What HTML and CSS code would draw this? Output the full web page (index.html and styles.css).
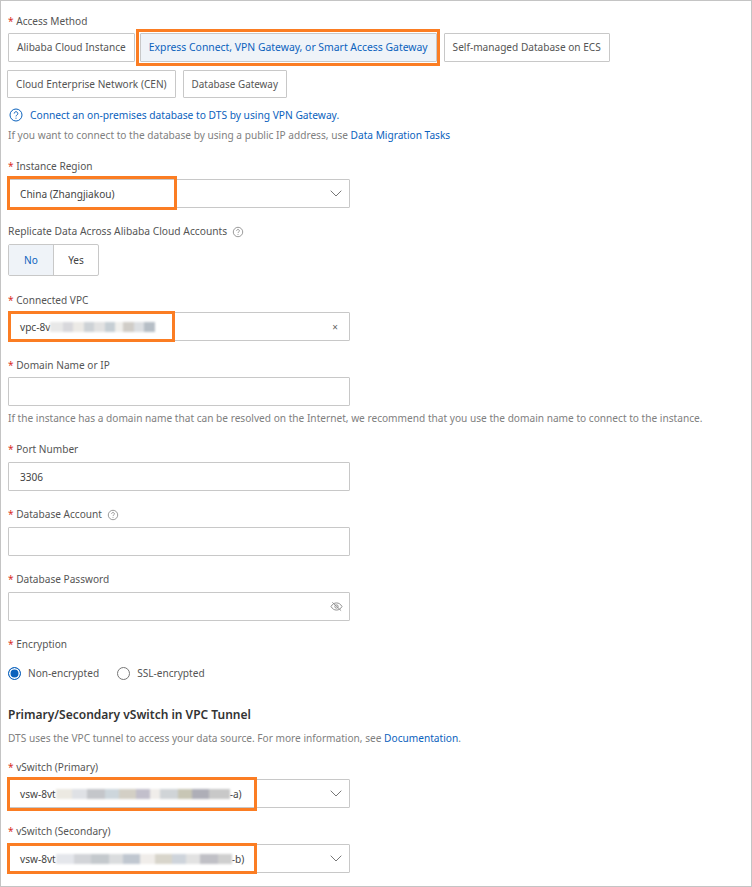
FILE: index.html
```html
<!DOCTYPE html>
<html lang="en">
<head>
<meta charset="utf-8">
<title>Access Method</title>
<link rel="stylesheet" href="styles.css">
</head>
<body>
<form class="panel">
  <div class="field">
    <div class="label label-tight"><span class="req">*</span> Access Method</div>
    <div class="choices">
      <span class="choice choice-first">Alibaba Cloud Instance</span>
      <span class="choice choice-on">Express Connect, VPN Gateway, or Smart Access Gateway<i class="mark mark-choice"></i></span>
      <span class="choice choice-third">Self-managed Database on ECS</span>
    </div>
    <div class="choices choices-second">
      <span class="choice">Cloud Enterprise Network (CEN)</span>
      <span class="choice choice-gateway">Database Gateway</span>
    </div>
    <div class="help-line">
      <svg class="qicon qicon-blue" viewBox="0 0 14 14"><circle cx="7" cy="7" r="6"/><path d="M5.2 5.500a1.800 1.800 0 1 1 2.700 1.600c-.6.3-.9.7-.9 1.300"/><path d="M7 9.700v1"/></svg>
      <a class="link link-help">Connect an on-premises database to DTS by using VPN Gateway.</a>
    </div>
    <div class="note note-tight">If you want to connect to the database by using a public IP address, use <a class="link">Data Migration Tasks</a></div>
  </div>

  <div class="field">
    <div class="label"><span class="req">*</span> Instance Region</div>
    <div class="control">China (Zhangjiakou)
      <svg class="chev" viewBox="0 0 12 7"><path d="M.7.7 6 6l5.300-5.300"/></svg>
      <i class="mark mark-region"></i>
    </div>
  </div>

  <div class="field field-toggle">
    <div class="label label-replicate">Replicate Data Across Alibaba Cloud Accounts
      <svg class="qicon" viewBox="0 0 14 14"><circle cx="7" cy="7" r="5.500"/><path d="M5.400 5.600a1.600 1.600 0 1 1 2.400 1.400c-.5.3-.8.6-.8 1.200"/><path d="M7 9.300v1"/></svg>
    </div>
    <div class="toggle"><span class="tog tog-on">No</span><span class="tog">Yes</span></div>
  </div>

  <div class="field field-vpc">
    <div class="label label-tight"><span class="req">*</span> Connected VPC</div>
    <div class="control"><span>vpc-8v</span><span class="blur blur-vpc"></span>
      <span class="clear">×</span>
      <i class="mark mark-vpc"></i>
    </div>
  </div>

  <div class="field">
    <div class="label label-tight"><span class="req">*</span> Domain Name or IP</div>
    <div class="control"></div>
    <div class="note note-hint">If the instance has a domain name that can be resolved on the Internet, we recommend that you use the domain name to connect to the instance.</div>
  </div>

  <div class="field">
    <div class="label"><span class="req">*</span> Port Number</div>
    <div class="control">3306</div>
  </div>

  <div class="field">
    <div class="label"><span class="req">*</span> Database Account
      <svg class="qicon" viewBox="0 0 14 14"><circle cx="7" cy="7" r="5.500"/><path d="M5.400 5.600a1.600 1.600 0 1 1 2.400 1.400c-.5.3-.8.6-.8 1.200"/><path d="M7 9.300v1"/></svg>
    </div>
    <div class="control"></div>
  </div>

  <div class="field">
    <div class="label"><span class="req">*</span> Database Password</div>
    <div class="control">
      <svg class="eye" viewBox="0 0 14 12"><path d="M1 6c1.500-2.600 3.500-3.900 6-3.900s4.500 1.300 6 3.900c-1.500 2.600-3.500 3.900-6 3.900S2.500 8.600 1 6z"/><circle cx="7" cy="6" r="1.800"/><path d="M2.500 1.500l9.500 9"/></svg>
    </div>
  </div>

  <div class="field field-radio">
    <div class="label"><span class="req">*</span> Encryption</div>
    <div class="radios">
      <span class="radio"><i class="dot dot-on"></i>Non-encrypted</span>
      <span class="radio"><i class="dot"></i>SSL-encrypted</span>
    </div>
  </div>

  <h3 class="heading">Primary/Secondary vSwitch in VPC Tunnel</h3>
  <div class="note note-desc">DTS uses the VPC tunnel to access your data source. For more information, see <a class="link">Documentation</a>.</div>

  <div class="field">
    <div class="label label-tight"><span class="req">*</span> vSwitch (Primary)</div>
    <div class="control"><span>vsw-8vt</span><span class="blur blur-a"></span><span>-a)</span>
      <svg class="chev" viewBox="0 0 12 7"><path d="M.7.7 6 6l5.300-5.300"/></svg>
      <i class="mark mark-vsw-a"></i>
    </div>
  </div>

  <div class="field field-last">
    <div class="label"><span class="req">*</span> vSwitch (Secondary)</div>
    <div class="control"><span>vsw-8vt</span><span class="blur blur-b"></span><span>-b)</span>
      <svg class="chev" viewBox="0 0 12 7"><path d="M.7.7 6 6l5.300-5.300"/></svg>
      <i class="mark mark-vsw-b"></i>
    </div>
  </div>
</form>
</body>
</html>
```
FILE: styles.css
```css
* { box-sizing: border-box; }
html, body { margin: 0; background: #fff; }
body { width: 752px; height: 887px; overflow: hidden; }
.panel {
  width: 752px; height: 887px;
  border: 1px solid #c4c4c4;
  padding: 12px 0 0 7px;
  font: 10.1px/16px "Noto Sans", "Open Sans", sans-serif;
  color: #555;
}
.field { margin-bottom: 15px; }
.label { height: 16px; margin-bottom: 5px; white-space: nowrap; }
.label-tight { margin-bottom: 4px; }
.label-replicate { font-size: 10.25px; }
.req { color: #d93026; }
.choices { display: flex; gap: 7px; }
.choices-second { margin: 8px 0 0 -1px; }
.choice {
  position: relative;
  height: 28.500px; padding: 0 8px; border: 1px solid #c8c8c8; border-radius: 1px;
  display: flex; align-items: center; white-space: nowrap; color: #555; background: #fff;
}
.choice-first { margin-right: -2px; }
.choice-on { background: #eff3f8; color: #0b62bd; font-size: 10.4px; }
.choice-gateway { font-size: 9.9px; }
.help-line { display: flex; align-items: center; gap: 7px; margin-top: 9px; height: 16px; }
.link { color: #0b62bd; }
.link-help { font-size: 10.23px; }
.note { color: #808080; white-space: nowrap; font-size: 10.14px; }
.note-tight { margin-top: 4px; }
.qicon { width: 12px; height: 12px; fill: none; stroke: #8a8a8a; stroke-width: 1; margin-left: 2px; vertical-align: -3px; }
.qicon-blue { width: 14px; height: 14px; stroke: #0b62bd; margin-left: 1px; }
.control {
  position: relative; width: 342px; height: 29px; padding: 0 11px;
  border: 1px solid #c8c8c8; border-radius: 1px;
  display: flex; align-items: center; white-space: nowrap; color: #444;
}
.chev { position: absolute; right: 7px; top: 10px; width: 12px; height: 7px; fill: none; stroke: #777; stroke-width: 1; }
.clear { position: absolute; right: 11px; top: 6px; font-size: 10px; color: #666; }
.eye { position: absolute; right: 6px; top: 8px; width: 13px; height: 11px; fill: none; stroke: #8a8a8a; stroke-width: 1; }
.mark { position: absolute; display: block; border: 3px solid #fb7d23; pointer-events: none; }
.mark-choice { left: -5px; right: -4px; top: -5px; bottom: -5.500px; }
.mark-region { left: -2px; top: -4px; width: 170px; height: 34px; }
.mark-vpc { left: -1px; top: -2px; width: 167px; height: 31px; }
.mark-vsw-a { left: -2px; top: -3px; width: 250px; height: 34px; }
.mark-vsw-b { left: -2px; top: -2px; width: 250px; height: 31px; }
.field-toggle { margin-bottom: 16px; }
.field-vpc { margin-bottom: 16px; }
.toggle { display: flex; width: 91px; height: 32px; border: 1px solid #c8c8c8; border-radius: 2px; }
.tog { flex: 1; display: flex; align-items: center; justify-content: center; color: #444; }
.tog-on { flex: 0 0 45px; background: #eff3f8; color: #0b62bd; border-right: 1px solid #c8c8c8; }
.note-hint { margin-top: 4px; }
.field-radio { margin-bottom: 26px; }
.radios { display: flex; gap: 18px; margin-top: 13px; }
.radio { display: flex; align-items: center; gap: 7px; color: #555; }
.dot { width: 13px; height: 13px; border: 1px solid #777; border-radius: 50%; background: #fff; }
.dot-on { border: 1.500px solid #0b62bd; box-shadow: inset 0 0 0 1.500px #fff; background: #0b62bd; }
.heading { margin: 0 0 7px; font-size: 12px; line-height: 16px; font-weight: 600; color: #333; }
.note-desc { margin-bottom: 13px; }
.field-last { margin-bottom: 0; }
.blur { display: inline-block; height: 10px; filter: blur(1px); }
.blur-vpc {
  width: 105px;
  background: linear-gradient(90deg, #e8e8e8 0 12%, #d8d8dc 12% 22%, #eceae6 22% 32%, #cdd2d6 32% 42%, #e2e2e2 42% 52%, #c6ced4 52% 62%, #f0efec 62% 70%, #d0cdc8 70% 80%, #dcdfe2 80% 90%, #b6bec6 90% 100%);
}
.blur-a {
  width: 174px;
  background: linear-gradient(90deg, #ece9e2 0 9%, #dfe1e5 9% 18%, #c4c6ca 18% 28%, #cdd6dc 28% 36%, #d3cfc5 36% 46%, #c2bfcb 46% 54%, #f0edea 54% 60%, #d0d4d7 60% 70%, #c8c6b5 70% 78%, #aeaeb7 78% 88%, #c8c8c8 88% 100%);
}
.blur-b {
  width: 176px;
  background: linear-gradient(90deg, #e4e6eb 0 10%, #d2d4d8 10% 20%, #c4c9cd 20% 30%, #dadcde 30% 38%, #c0c7d0 38% 48%, #f0edea 48% 56%, #d8d5cb 56% 66%, #ced4db 66% 74%, #e2e2e2 74% 82%, #c0c0c6 82% 92%, #cfcfcf 92% 100%);
}
```
